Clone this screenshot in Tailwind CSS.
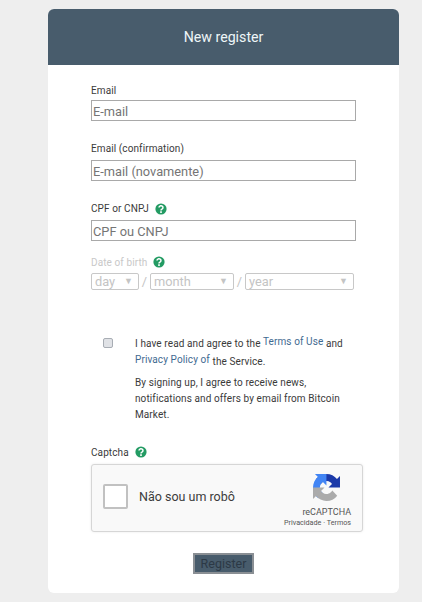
<!DOCTYPE html>
<html lang="en">
<head>
  <meta charset="UTF-8" />
  <title>New register</title>
  <script src="https://cdn.jsdelivr.net/npm/@tailwindcss/browser@4"></script>
</head>
<body class="bg-[#eeeeee] font-['Roboto',sans-serif] h-[602px] overflow-hidden">
  <div class="ml-[48px] mt-[9px] w-[351px] h-[584px] bg-white rounded-[6px] overflow-hidden">
    <!-- header -->
    <div class="h-[56px] pt-[2px] bg-[#485c6c] flex items-center justify-center text-[#eef6f8] text-[14.2px]">New register</div>

    <div class="px-[43px] text-[#3a3a3a] text-[10px] tracking-[0.1px]">
      <!-- email -->
      <label class="block mt-[19px] h-[16px] leading-[14px]">Email</label>
      <input type="text" placeholder="E-mail" class="block w-[265px] h-[21px] border border-[#a9a9a9] px-[1px] pt-[2px] text-[12.8px] tracking-normal placeholder-[#757575] outline-none" />

      <label class="block mt-[19px] h-[20px] leading-[18px]">Email (confirmation)</label>
      <input type="text" placeholder="E-mail (novamente)" class="block w-[265px] h-[21px] border border-[#a9a9a9] px-[1px] pt-[2px] text-[12.8px] tracking-normal placeholder-[#757575] outline-none" />

      <!-- cpf -->
      <div class="mt-[19px] h-[20px] flex items-start gap-[6px] leading-[18px]">
        <span>CPF or CNPJ</span>
        <svg class="w-[12px] h-[12px] mt-[3px]" viewBox="0 0 12 12"><circle cx="6" cy="6" r="5.6" fill="#239b63"/><path d="M4 4.6a2 1.9 0 1 1 3 1.6c-.7.4-1 .6-1 1.2" fill="none" stroke="#fff" stroke-width="1.5"/><rect x="5.1" y="8.3" width="1.8" height="1.6" fill="#fff"/></svg>
      </div>
      <input type="text" placeholder="CPF ou CNPJ" class="block w-[265px] h-[21px] border border-[#a9a9a9] px-[1px] pt-[2px] text-[12.8px] tracking-normal placeholder-[#757575] outline-none" />

      <!-- date of birth -->
      <div class="mt-[14px] h-[20px] flex items-start gap-[6px] leading-[16px] text-[#c8c8c8]">
        <span>Date of birth</span>
        <svg class="w-[12px] h-[12px] mt-[1px]" viewBox="0 0 12 12"><circle cx="6" cy="6" r="5.6" fill="#239b63"/><path d="M4 4.6a2 1.9 0 1 1 3 1.6c-.7.4-1 .6-1 1.2" fill="none" stroke="#fff" stroke-width="1.5"/><rect x="5.1" y="8.3" width="1.8" height="1.6" fill="#fff"/></svg>
      </div>
      <div class="mt-[-2px] flex items-center text-[12.8px] tracking-normal text-[#c4c4c4] h-[17px]">
        <div class="w-[48px] h-[17px] border border-[#c8c8c8] rounded-[2px] pl-[3px] flex items-center justify-between pr-[5px]"><span>day</span><span class="text-[9px]">▼</span></div>
        <span class="w-[11px] text-center">/</span>
        <div class="w-[84px] h-[17px] border border-[#c8c8c8] rounded-[2px] pl-[3px] flex items-center justify-between pr-[5px]"><span>month</span><span class="text-[9px]">▼</span></div>
        <span class="w-[11px] text-center">/</span>
        <div class="w-[109px] h-[17px] border border-[#c8c8c8] rounded-[2px] pl-[3px] flex items-center justify-between pr-[5px]"><span>year</span><span class="text-[9px]">▼</span></div>
      </div>

      <!-- terms -->
      <div class="mt-[45px] flex items-start">
        <div class="w-[10px] h-[10px] mt-[3px] ml-[12px] mr-[22px] rounded-[2px] border border-[#a8adb4] bg-[#e0e2e6] shrink-0"></div>
        <div class="w-[214px]">
          <p class="leading-[18px]">I have read and agree to the <a class="text-[#3f6a91] relative top-[-2px]">Terms of Use</a> and <a class="text-[#3f6a91] relative top-[-2px]">Privacy Policy of</a> the Service.</p>
          <p class="mt-[4px] leading-[16px]">By signing up, I agree to receive news, notifications and offers by email from Bitcoin Market.</p>
        </div>
      </div>

      <!-- captcha -->
      <div class="mt-[21px] h-[20px] flex items-start gap-[6px] leading-[17px]">
        <span>Captcha</span>
        <svg class="w-[12px] h-[12px] mt-[2px]" viewBox="0 0 12 12"><circle cx="6" cy="6" r="5.6" fill="#239b63"/><path d="M4 4.6a2 1.9 0 1 1 3 1.6c-.7.4-1 .6-1 1.2" fill="none" stroke="#fff" stroke-width="1.5"/><rect x="5.1" y="8.3" width="1.8" height="1.6" fill="#fff"/></svg>
      </div>
      <div class="w-[272px] h-[68px] bg-[#f9f9f9] border border-[#d6d6d6] rounded-[3px] shadow-[0_0_3px_rgba(0,0,0,0.08)] flex items-center pl-[11px] pr-[11px] tracking-normal">
        <div class="w-[25px] h-[25px] mt-[-3px] bg-white border-2 border-[#c1c1c1] rounded-[2px]"></div>
        <span class="ml-[11px] mt-[-1px] text-[12.5px] text-[#3c3c3c]">Não sou um robô</span>
        <div class="ml-auto self-start mt-[9px] flex flex-col items-end">
          <svg class="w-[27px] h-[27px] mr-[11px]" viewBox="0 0 64 64">
            <path d="M64 31.955l-.033-1.37V4.687l-7.16 7.16C50.948 4.674 42.033.093 32.05.093c-10.4 0-19.622 4.96-25.458 12.64l11.736 11.86a15.55 15.55 0 0 1 4.754-5.334c2.05-1.6 4.952-2.906 8.968-2.906.485 0 .86.057 1.135.163 4.976.393 9.288 3.14 11.828 7.124l-8.307 8.307L64 31.953" fill="#1c3aa9"/>
            <path d="M31.862.094l-1.37.033H4.594l7.16 7.16C4.58 13.147 0 22.06 0 32.046c0 10.4 4.96 19.622 12.64 25.458l11.86-11.736a15.55 15.55 0 0 1-5.334-4.754c-1.6-2.05-2.906-4.952-2.906-8.968 0-.485.057-.86.163-1.135.393-4.976 3.14-9.288 7.124-11.828l8.307 8.307L31.86.095" fill="#4285f4"/>
            <path d="M.001 32.045l.033 1.37v25.898l7.16-7.16c5.86 7.173 14.774 11.754 24.76 11.754 10.4 0 19.622-4.96 25.458-12.64L45.676 39.4a15.55 15.55 0 0 1-4.754 5.334c-2.05 1.6-4.952 2.906-8.968 2.906-.485 0-.86-.057-1.135-.163-4.976-.393-9.288-3.14-11.828-7.124l8.307-8.307c-10.522.04-22.4.066-27.295-.002" fill="#ababab"/>
          </svg>
          <span class="text-[9px] leading-[12px] text-[#555555] mt-[5px]">reCAPTCHA</span>
          <span class="text-[7.2px] leading-[10px] text-[#555555]">Privacidade · Termos</span>
        </div>
      </div>

      <!-- submit -->
      <div class="flex justify-center mt-[21px] tracking-normal">
        <button class="w-[61px] h-[21px] bg-[#485c6c] border-2 border-[#8a8f94] text-[12.5px] text-[#2c3946]">Register</button>
      </div>
    </div>
  </div>
</body>
</html>
